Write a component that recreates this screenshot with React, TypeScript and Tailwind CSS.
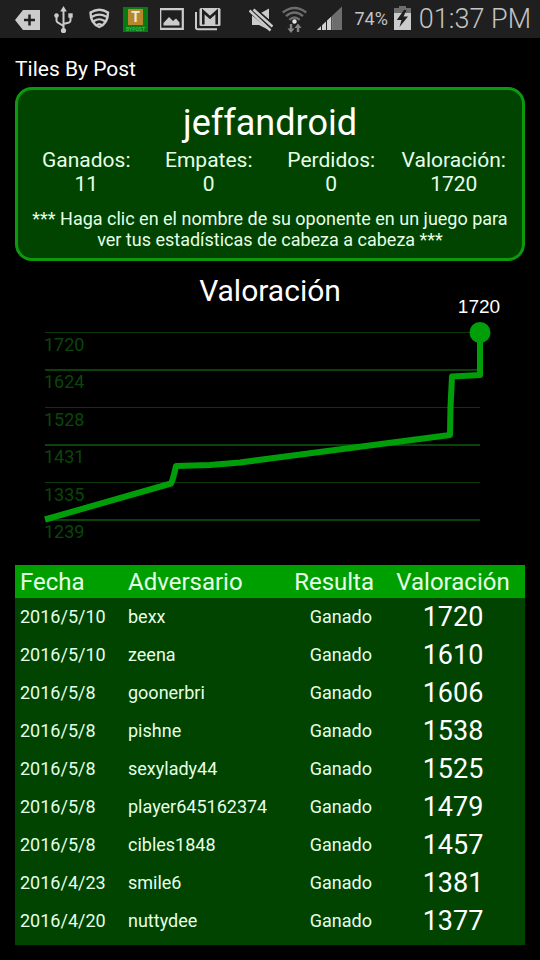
import type { ReactNode } from "react";

const stats = [
  { label: "Ganados:", value: "11" },
  { label: "Empates:", value: "0" },
  { label: "Perdidos:", value: "0" },
  { label: "Valoración:", value: "1720" },
];

const games = [
  { date: "2016/5/10", rival: "bexx", result: "Ganado", rating: 1720 },
  { date: "2016/5/10", rival: "zeena", result: "Ganado", rating: 1610 },
  { date: "2016/5/8", rival: "goonerbri", result: "Ganado", rating: 1606 },
  { date: "2016/5/8", rival: "pishne", result: "Ganado", rating: 1538 },
  { date: "2016/5/8", rival: "sexylady44", result: "Ganado", rating: 1525 },
  { date: "2016/5/8", rival: "player645162374", result: "Ganado", rating: 1479 },
  { date: "2016/5/8", rival: "cibles1848", result: "Ganado", rating: 1457 },
  { date: "2016/4/23", rival: "smile6", result: "Ganado", rating: 1381 },
  { date: "2016/4/20", rival: "nuttydee", result: "Ganado", rating: 1377 },
];

const levels = [
  { label: "1720", y: 62, thick: false },
  { label: "1624", y: 99, thick: true },
  { label: "1528", y: 137, thick: false },
  { label: "1431", y: 174, thick: true },
  { label: "1335", y: 212, thick: false },
  { label: "1239", y: 249, thick: true },
];

function Glyph({ box, className, children }: { box: string; className: string; children: ReactNode }) {
  return (
    <svg viewBox={box} className={`h-[38px] shrink-0 ${className}`} aria-hidden="true">
      {children}
    </svg>
  );
}

function StatusBar() {
  return (
    <header className="flex h-[38px] items-center bg-[#1f1f1f] pr-[9px] pl-[15px] text-[#c4c4c4]">
      <div className="flex items-center gap-3">
        <Glyph box="0 0 25 38" className="w-[25px]">
          <path d="M0 20 8 10H25V30H8Z" fill="#cbcbcb" />
          <path d="M14.500 14.500V25.500M9 20H20" stroke="#1f1f1f" strokeWidth="2.500" />
        </Glyph>
        <Glyph box="0 0 24 38" className="w-6">
          <path d="M11.500 9V30M4.500 16V20.500Q4.500 22 6 22.700L11.500 26M18.500 16V20.500Q18.500 22 17 22.500L11.500 24" fill="none" stroke="#cbcbcb" strokeWidth="2" />
          <path d="M11.500 6 14.800 11.500H8.200Z" fill="#cbcbcb" />
          <circle cx="11.500" cy="30.500" r="2.600" fill="#cbcbcb" />
          <circle cx="4.500" cy="15.500" r="2.300" fill="#cbcbcb" />
          <path d="M16.300 13.300H20.700V17.700H16.300Z" fill="#cbcbcb" />
        </Glyph>
        <Glyph box="0 0 23 38" className="w-[23px]">
          <g fill="none" stroke="#cbcbcb" strokeLinecap="round">
            <path d="M2.500 12.500Q11.500 7 20 12.500C20 18.500 17.500 24.500 11.300 27C5 24.500 2.500 18.500 2.500 12.500Z" strokeWidth="2.400" />
            <path d="M4 16.800Q11.300 12.500 18.600 16.800" strokeWidth="2.200" />
            <path d="M6 21Q11.300 17.500 16.600 21" strokeWidth="2.200" />
            <path d="M9 24.800Q11.300 23.200 13.600 24.800" strokeWidth="2" />
          </g>
        </Glyph>
        <Glyph box="0 0 25 38" className="w-[25px]">
          <path d="M0 7H25V32H0Z" fill="#087a12" />
          <path d="M5 9H20V25H5Z" fill="#b8862c" />
          <text x="12.500" y="22" textAnchor="middle" fill="#eee8d8" fontSize="14" fontWeight="700">T</text>
          <text x="12.500" y="31" textAnchor="middle" fill="#39b54a" fontSize="5" fontWeight="700">BYPOST</text>
        </Glyph>
        <Glyph box="1 0 24 38" className="w-6">
          <path d="M1.200 9.200H23.800V28.800H1.200Z" fill="none" stroke="#cbcbcb" strokeWidth="2.200" />
          <path d="M4.500 25.500V23L10 17 14 21 17 18.500 20.500 22.500V25.500Z" fill="#cbcbcb" />
        </Glyph>
        <Glyph box="0 0 26 38" className="-ml-px w-[26px]">
          <path d="M1 12V27.500Q1 29.200 2.700 29.200H22" fill="none" stroke="#cbcbcb" strokeWidth="2" />
          <rect x="4.500" y="8" width="21" height="18" rx="1.500" fill="#cbcbcb" />
          <path d="M8.300 24.500V11.500L15 17.500 21.700 11.500V24.500" fill="none" stroke="#1f1f1f" strokeWidth="2.600" />
        </Glyph>
      </div>
      <div className="ml-auto flex items-center">
        <Glyph box="0 0 24 38" className="mr-[9px] w-6">
          <path d="M3 14H10L20 8.500V30L10 25H3Z" fill="#cbcbcb" />
          <path d="M2.500 9.500 25 29" stroke="#1f1f1f" strokeWidth="8" />
          <path d="M.5 10.500 21.500 30.500M4.500 9.500 23.500 26.500" fill="none" stroke="#cbcbcb" strokeWidth="2.600" />
        </Glyph>
        <Glyph box="0 0 25 38" className="mr-2.5 w-[25px]">
          <g fill="none" stroke="#6d6d6d" strokeWidth="2.400">
            <path d="M.8 12.500Q12.500 3.500 24.200 12.500" />
            <path d="M4 16.200Q12.500 9 21 16.200" />
            <path d="M7.300 19.800Q12.500 15 17.700 19.800" />
          </g>
          <circle cx="12.500" cy="21.500" r="2.200" fill="#e4e4e4" />
          <path d="M9 24V31M16 32V25" stroke="#858585" strokeWidth="2.400" />
          <path d="M5.500 28.500H12.500L9 33ZM12.500 28H19.500L16 23.500Z" fill="#858585" />
        </Glyph>
        <Glyph box="0 0 25 38" className="mr-3 w-[25px]">
          <path d="M0 30 25 6.500V30Z" fill="#6d6d6d" />
          <path d="M0 30 15.500 15.400V30Z" fill="#d0d0d0" />
          <path d="M4.500 24V30M9.500 20V30M14.800 14V30" stroke="#1f1f1f" strokeWidth="1" />
        </Glyph>
        <span className="mr-1.5 text-[18px] leading-none">74%</span>
        <Glyph box="0 0 17 38" className="mr-2 w-[17px]">
          <path d="M5 6H12V8H17V14H0V8H5Z" fill="#6d6d6d" />
          <path d="M0 13H17V30H0Z" fill="#cbcbcb" />
          <path d="M10 10 2.800 20H7.500L5.500 27 14 16.500H9.500L12.500 10Z" fill="#1f1f1f" />
        </Glyph>
        <span className="text-[27px] leading-none font-light">01:37 PM</span>
      </div>
    </header>
  );
}

function RatingChart() {
  return (
    <svg viewBox="0 0 510 279" className="block w-full" role="img" aria-label="Valoración">
      {levels.map((level) => (
        <g key={level.label}>
          <path
            d={`M30 ${level.thick ? level.y + 1 : level.y + 0.5}H465`}
            stroke={level.thick ? "#0b420b" : "#0b380b"}
            strokeWidth={level.thick ? 2 : 1}
          />
          <text x="29" y={level.y + 19} fontSize="18" fill="#0a460a">
            {level.label}
          </text>
        </g>
      ))}
      <path
        d="M30 249.500 156 213.500Q158 210 161 196L195 195 225 192.500 255 188.500 435 165 435.500 137 437 106.500 465 105V62"
        fill="none"
        stroke="#009f0a"
        strokeWidth="6"
        strokeLinejoin="round"
      />
      <circle cx="465" cy="62.500" r="10.500" fill="#009f0a" />
      <text x="464" y="43" textAnchor="middle" fontSize="19" fill="#ffffff" className="font-['Liberation_Sans',sans-serif]">
        1720
      </text>
    </svg>
  );
}

export default function App() {
  return (
    <div className="min-h-screen bg-black font-[Roboto,sans-serif] text-white">
      <StatusBar />
      <main className="px-[15px] pt-[19px] pb-[15px]">
        <h1 className="mb-1.5 text-[21px] leading-6">Tiles By Post</h1>
        <section className="rounded-[17px] border-3 border-[#0d990d] bg-[#004400] px-[7px] pt-2 pb-2 text-center text-[#e6ffe6]">
          <h2 className="text-[36px] leading-[50px] text-white">jeffandroid</h2>
          <dl className="grid grid-cols-4 text-[21px] leading-6">
            {stats.map((stat) => (
              <div key={stat.label}>
                <dt>{stat.label}</dt>
                <dd>{stat.value}</dd>
              </div>
            ))}
          </dl>
          <p className="mt-3 text-[18px] leading-[21px]">
            *** Haga clic en el nombre de su oponente en un juego para ver tus estadísticas de cabeza a cabeza ***
          </p>
        </section>
        <section className="grid pt-[9px]">
          <h2 className="col-start-1 row-start-1 text-center text-[30px] leading-[42px]">Valoración</h2>
          <div className="col-start-1 row-start-1">
            <RatingChart />
          </div>
        </section>
        <div className="mt-4 bg-[#004400] pb-[5px] text-[#e6ffe6]">
          <table className="w-full table-fixed border-collapse text-left text-[18px] leading-5">
            <colgroup>
              <col className="w-[113px]" />
              <col />
              <col className="w-[92px]" />
              <col className="w-[144px]" />
            </colgroup>
            <thead>
              <tr className="h-[33px] bg-[#009f00] text-[24px] leading-8">
                <th className="pl-[5px] font-normal">Fecha</th>
                <th className="font-normal">Adversario</th>
                <th className="pr-[7px] text-right font-normal">Resulta</th>
                <th className="text-center font-normal">Valoración</th>
              </tr>
            </thead>
            <tbody>
              {games.map((game) => (
                <tr key={game.rival} className="h-[38px]">
                  <td className="pl-[5px]">{game.date}</td>
                  <td>{game.rival}</td>
                  <td className="pr-[9px] text-right">{game.result}</td>
                  <td className="text-center text-[27px] text-white">{game.rating}</td>
                </tr>
              ))}
            </tbody>
          </table>
        </div>
      </main>
    </div>
  );
}
